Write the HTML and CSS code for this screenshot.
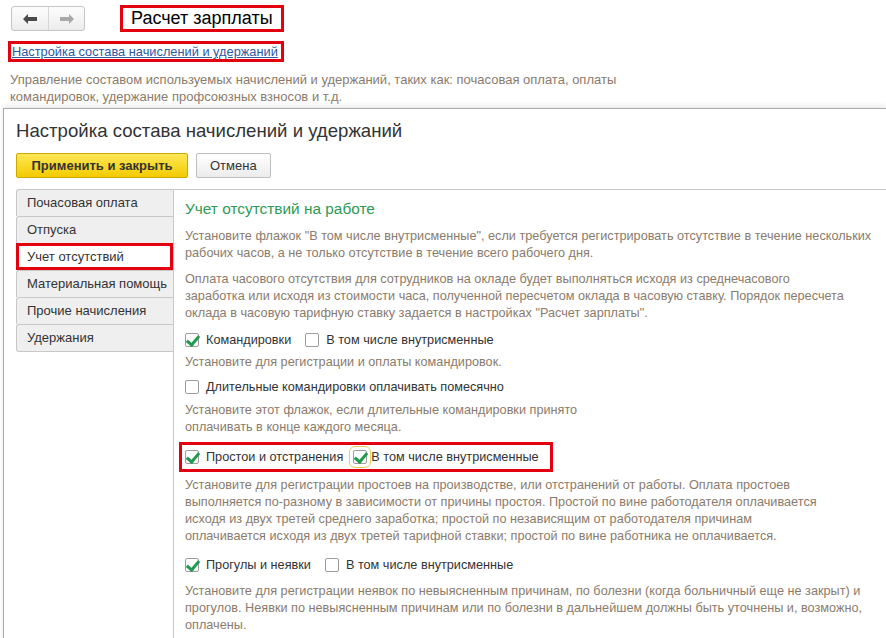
FILE: index.html
```html
<!DOCTYPE html>
<html lang="ru">
<head>
    <meta charset="utf-8" />
    <title>Расчет зарплаты</title>
    <link rel="stylesheet" href="styles.css">
</head>
<body>
    <header class="topbar">
        <div class="nav">
            <button class="nav-btn"><svg width="14" height="10" viewBox="0 0 14 10"><path d="M0 5 L5 0 L5 3 L14 3 L14 7 L5 7 L5 10 Z" fill="#4a4a4a"/></svg></button>
            <button class="nav-btn"><svg width="14" height="10" viewBox="0 0 14 10"><path d="M14 5 L9 0 L9 3 L0 3 L0 7 L9 7 L9 10 Z" fill="#a8a8a8"/></svg></button>
        </div>
        <div class="page-title mark">Расчет зарплаты</div>
    </header>

    <a class="settings-link mark" href="#">Настройка состава начислений и удержаний</a>
    <p class="intro">Управление составом используемых начислений и удержаний, таких как: почасовая оплата, оплаты<br>командировок, удержание профсоюзных взносов и т.д.</p>

    <section class="window">
        <h1>Настройка состава начислений и удержаний</h1>
        <div class="toolbar">
            <button class="btn btn-main">Применить и закрыть</button>
            <button class="btn">Отмена</button>
        </div>

        <div class="layout">
            <ul class="tabs">
                <li>Почасовая оплата</li>
                <li>Отпуска</li>
                <li class="active">Учет отсутствий</li>
                <li>Материальная помощь</li>
                <li>Прочие начисления</li>
                <li>Удержания</li>
            </ul>

            <div class="panel">
                <h2>Учет отсутствий на работе</h2>
                <p class="hint">Установите флажок "В том числе внутрисменные", если требуется регистрировать отсутствие в течение нескольких<br>рабочих часов, а не только отсутствие в течение всего рабочего дня.</p>
                <p class="hint">Оплата часового отсутствия для сотрудников на окладе будет выполняться исходя из среднечасового<br>заработка или исходя из стоимости часа, полученной пересчетом оклада в часовую ставку. Порядок пересчета<br>оклада в часовую тарифную ставку задается в настройках "Расчет зарплаты".</p>

                <div class="row r1">
                    <label class="check"><span class="box on"></span>Командировки</label>
                    <label class="check"><span class="box"></span>В том числе внутрисменные</label>
                </div>
                <p class="hint h1">Установите для регистрации и оплаты командировок.</p>

                <div class="row r2">
                    <label class="check"><span class="box"></span>Длительные командировки оплачивать помесячно</label>
                </div>
                <p class="hint h2">Установите этот флажок, если длительные командировки принято<br>оплачивать в конце каждого месяца.</p>

                <div class="row r3 marked">
                    <label class="check"><span class="box on"></span>Простои и отстранения</label>
                    <label class="check focus"><span class="box on"></span>В том числе внутрисменные</label>
                </div>
                <p class="hint h3">Установите для регистрации простоев на производстве, или отстранений от работы. Оплата простоев<br>выполняется по-разному в зависимости от причины простоя. Простой по вине работодателя оплачивается<br>исходя из двух третей среднего заработка; простой по независящим от работодателя причинам<br>оплачивается исходя из двух третей тарифной ставки; простой по вине работника не оплачивается.</p>

                <div class="row r4">
                    <label class="check"><span class="box on"></span>Прогулы и неявки</label>
                    <label class="check"><span class="box"></span>В том числе внутрисменные</label>
                </div>
                <p class="hint h4">Установите для регистрации неявок по невыясненным причинам, по болезни (когда больничный еще не закрыт) и<br>прогулов. Неявки по невыясненным причинам или по болезни в дальнейшем должны быть уточнены и, возможно,<br>оплачены.</p>
            </div>
        </div>
    </section>
</body>
</html>
```

FILE: styles.css
```css
/* Global */
body {
    margin: 0;
    font-family: "Liberation Sans", Arial, sans-serif;
    color: #333;
    background: #fff;
    overflow: hidden;
}

/* Red annotation frames */
.mark {
    border: 3px solid #e3000f;
}

/* Top bar */
.topbar {
    display: flex;
    align-items: center;
    gap: 35px;
    padding: 5px 0 0 11px;
}

.nav {
    display: flex;
    height: 23px;
    border: 1px solid #c4c4c4;
    border-radius: 3px;
    background: linear-gradient(#fdfdfd, #ececec);
}

.nav-btn {
    width: 36px;
    border: none;
    background: none;
    padding: 0;
    display: flex;
    align-items: center;
    justify-content: center;
}

.nav-btn + .nav-btn {
    border-left: 1px solid #d6d6d6;
}

.page-title {
    font-size: 18px;
    color: #000;
    height: 21px;
    line-height: 21px;
    padding: 0 8px;
}

/* Link and intro */
.settings-link {
    display: inline-block;
    margin: 9px 0 0 8px;
    padding: 0 3px 0 1px;
    height: 15px;
    line-height: 15px;
    font-size: 12.8px;
    color: #2d5a9f;
}

.intro {
    margin: 9px 0 0 10px;
    white-space: nowrap;
    font-size: 13px;
    line-height: 17px;
    color: #8a7b6c;
}

/* Form window */
.window {
    margin: 3px 0 0 3px;
    border-top: 1px solid #a9a9a9;
    border-left: 1px solid #a9a9a9;
    box-shadow: 0 -3px 5px rgba(0, 0, 0, 0.07);
    padding: 11px 0 0 12px;
}

h1 {
    margin: 0;
    font-size: 18.6px;
    font-weight: normal;
    line-height: 22px;
    color: #333;
}

.toolbar {
    display: flex;
    gap: 8px;
    margin-top: 11px;
}

.btn {
    height: 25px;
    padding: 0 13px;
    font-family: inherit;
    font-size: 13px;
    color: #333;
    border: 1px solid #bdbdbd;
    border-radius: 2px;
    background: linear-gradient(#ffffff, #ececec);
}

.btn-main {
    width: 172px;
    font-weight: bold;
    border-color: #c9a800;
    background: linear-gradient(#ffe757, #f3cb00);
}

/* Tabs + panel */
.layout {
    display: flex;
    margin-top: 11px;
}

.tabs {
    list-style: none;
    margin: 0;
    padding: 0;
    width: 157px;
    flex-shrink: 0;
}

.tabs li {
    height: 26px;
    line-height: 26px;
    padding-left: 10px;
    font-size: 13px;
    color: #333;
    background: #efefef;
    border: 1px solid #c8c8c8;
    border-right: none;
    border-bottom: none;
    border-radius: 3px 0 0 0;
}

.tabs li:last-child {
    border-bottom: 1px solid #c8c8c8;
    border-radius: 3px 0 0 3px;
}

.tabs li.active {
    background: #fff;
    height: 21px;
    line-height: 21px;
    padding-left: 8px;
    border: 3px solid #e3000f;
    border-radius: 0;
}

.panel {
    flex: 1;
    border-top: 1px solid #c8c8c8;
    border-left: 1px solid #c8c8c8;
    padding: 9px 0 20px 11px;
    height: 500px;
}

h2 {
    margin: 0;
    font-size: 15.4px;
    font-weight: normal;
    line-height: 20px;
    color: #2e9a55;
}

.hint {
    margin: 9px 0 0 0;
    white-space: nowrap;
    font-size: 12.7px;
    line-height: 17px;
    color: #8a7b6c;
}

.hint.h1 { margin-top: 4px; }
.hint.h2 { margin-top: 5px; }
.hint.h3 { margin-top: 5px; }
.hint.h4 { margin-top: 8px; }

/* Checkbox rows */
.row {
    display: flex;
    align-items: center;
    gap: 14px;
    height: 20px;
    white-space: nowrap;
}

.row.r1 { margin-top: 8px; }
.row.r2 { margin-top: 6px; }
.row.r3 { margin-top: 6px; }
.row.r4 { margin-top: 10px; }

.row.marked {
    width: fit-content;
    height: 24px;
    margin-left: -6px;
    padding: 0 11px 0 3px;
    gap: 7px;
    border: 3px solid #e3000f;
}

.check {
    display: flex;
    align-items: center;
    gap: 7px;
    font-size: 12.7px;
    color: #333;
}

.check.focus {
    gap: 4px;
}

.box {
    width: 14px;
    height: 14px;
    flex-shrink: 0;
    border: 1px solid #9c9c9c;
    border-radius: 2px;
    background: #fff;
    box-sizing: border-box;
    position: relative;
}

.box.on::after {
    content: "";
    position: absolute;
    left: 3px;
    top: -1px;
    width: 5px;
    height: 10px;
    border-right: 3px solid #1f9a4f;
    border-bottom: 3px solid #1f9a4f;
    transform: rotate(40deg);
}

.focus .box {
    margin-left: 3px;
    outline: 1px solid #e8cf5a;
    outline-offset: 3px;
}
```
